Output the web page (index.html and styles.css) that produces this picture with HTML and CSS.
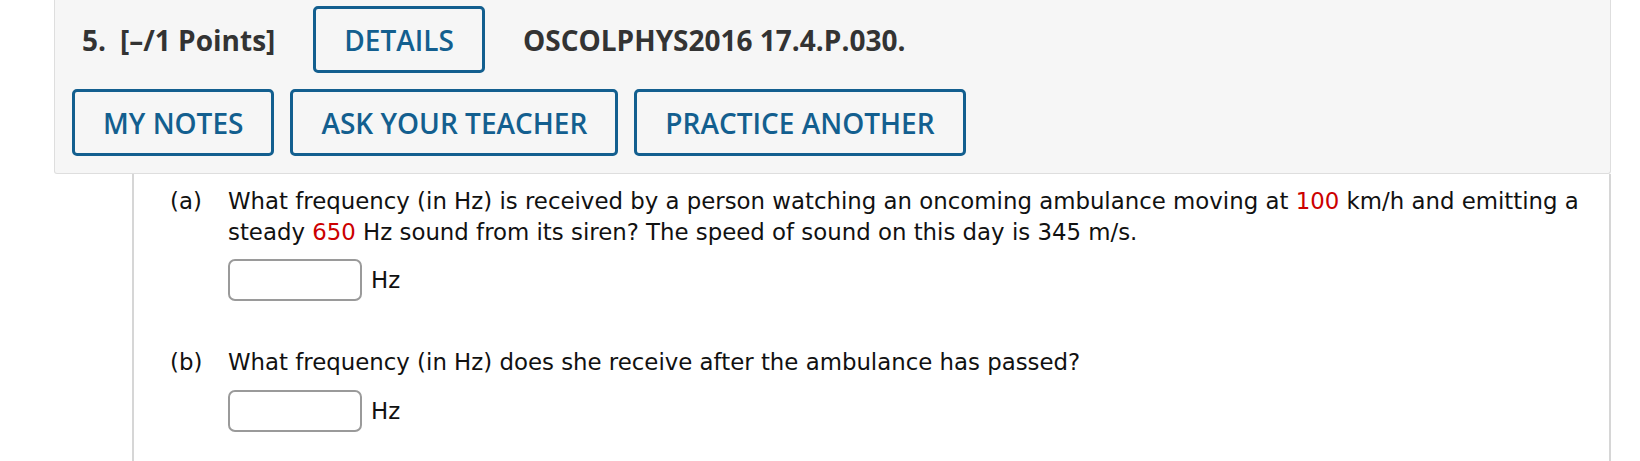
FILE: index.html
```html
<!DOCTYPE html>
<html>
<head>
<meta charset="utf-8">
<link rel="stylesheet" href="styles.css">
</head>
<body>
<div class="question">
  <div class="header">
    <div class="row row-top">
      <div class="title"><span class="num">5.</span><span>[–/1 Points]</span></div>
      <button class="btn">DETAILS</button>
      <div class="title code">OSCOLPHYS2016 17.4.P.030.</div>
    </div>
    <div class="row row-bottom">
      <button class="btn">MY NOTES</button>
      <button class="btn">ASK YOUR TEACHER</button>
      <button class="btn">PRACTICE ANOTHER</button>
    </div>
  </div>
  <div class="content">
    <div class="part">
      <div class="label">(a)</div>
      <div class="body">
        <p class="text">What frequency (in Hz) is received by a person watching an oncoming ambulance moving at <span class="red">100</span> km/h and emitting a steady <span class="red">650</span> Hz sound from its siren? The speed of sound on this day is 345 m/s.</p>
        <div class="answer"><span class="input"></span><span class="unit">Hz</span></div>
      </div>
    </div>
    <div class="part part-b">
      <div class="label">(b)</div>
      <div class="body">
        <p class="text">What frequency (in Hz) does she receive after the ambulance has passed?</p>
        <div class="answer answer-b"><span class="input"></span><span class="unit">Hz</span></div>
      </div>
    </div>
  </div>
</div>
</body>
</html>
```
FILE: styles.css
```css
html, body {
  margin: 0;
  padding: 0;
  background: #ffffff;
}
.question {
  margin-left: 54px;
  width: 1557px;
}
.header {
  background: #f6f6f6;
  border: 1px solid #dedede;
  border-top: none;
  border-radius: 0 0 3px 3px;
  padding: 6px 0 17px 17px;
  font-family: "Open Sans", sans-serif;
}
.row {
  display: flex;
  align-items: center;
}
.row-top {
  padding-left: 10px;
  gap: 38px;
}
.row-bottom {
  margin-top: 16px;
  gap: 16px;
}
.title {
  font-weight: 700;
  font-size: 28px;
  color: #333333;
}
.num {
  margin-right: 14px;
}
.btn {
  height: 67px;
  box-sizing: border-box;
  padding: 0 28px;
  background: #f6f6f6;
  border: 3px solid #135f8f;
  border-radius: 5px;
  color: #135f8f;
  font-family: "Open Sans", sans-serif;
  font-weight: 600;
  font-size: 28px;
  line-height: 1;
}
.content {
  margin-left: 78px;
  border-left: 2px solid #d6d6d6;
  border-right: 2px solid #d6d6d6;
  padding: 12px 0 40px 36px;
  font-family: "DejaVu Sans", Verdana, sans-serif;
  font-size: 22.85px;
  color: #111111;
}
.part {
  display: flex;
}
.part-b {
  margin-top: 46px;
}
.label {
  width: 58px;
  flex: none;
  line-height: 31px;
}
.body {
  flex: 1;
  padding-right: 8px;
}
.text {
  margin: 0;
  line-height: 31px;
}
.red {
  color: #cc0000;
}
.answer {
  display: flex;
  align-items: center;
  margin-top: 11px;
}
.answer-b {
  margin-top: 12px;
}
.input {
  width: 134px;
  height: 42px;
  box-sizing: border-box;
  border: 2px solid #9a9a9a;
  border-radius: 7px;
  background: #ffffff;
}
.unit {
  margin-left: 9px;
}
```
